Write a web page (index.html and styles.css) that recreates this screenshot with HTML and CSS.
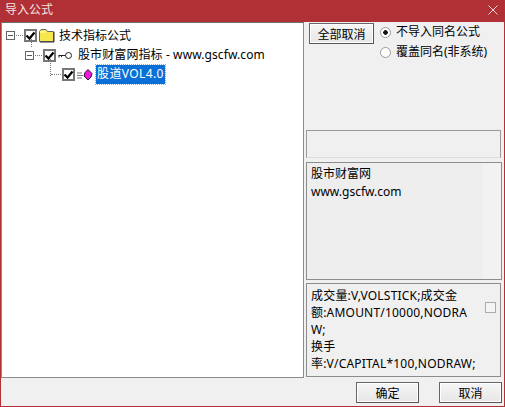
FILE: index.html
```html
<!DOCTYPE html>
<html lang="zh">
<head>
<meta charset="utf-8">
<title>导入公式</title>
<link rel="stylesheet" href="styles.css">
</head>
<body>
<div class="window">
  <header class="titlebar">
    <span class="title">导入公式</span>
    <svg class="close" width="10" height="10" viewBox="0 0 10 10"><path d="M.5.5l9 9M9.500.5l-9 9" stroke="#f0d8d8" stroke-width="1" fill="none"/></svg>
  </header>
  <div class="main">
    <section class="tree">
      <div class="node">
        <span class="expander"></span><span class="dots-h"></span>
        <span class="check"><svg width="11" height="11" viewBox="0 0 11 11"><path d="M1.500 5.500l3 3 5-6" stroke="#000" stroke-width="2.200" fill="none"/></svg></span>
        <svg class="icon" width="16" height="14" viewBox="0 0 16 14"><path d="M.5 12.500V2.500l1.500-2h5l1.500 2h6v10z" fill="#f7e64e" stroke="#666"/><path d="M1 3h6" stroke="#fffbc8"/><path d="M15 3v10M1 13h14" stroke="#333"/></svg>
        <span class="label">技术指标公式</span>
      </div>
      <div class="node level2">
        <span class="vline v1"></span>
        <span class="expander"></span><span class="dots-h"></span>
        <span class="check"><svg width="11" height="11" viewBox="0 0 11 11"><path d="M1.500 5.500l3 3 5-6" stroke="#000" stroke-width="2.200" fill="none"/></svg></span>
        <svg class="icon key" width="15" height="9" viewBox="0 0 15 9"><circle cx="10.500" cy="4.500" r="3" fill="#fff" stroke="#222"/><path d="M7.500 4.500H.5M1 4.500v2M3.500 4.500v1.500" stroke="#222" fill="none"/></svg>
        <span class="label wide">股市财富网指标 - www.gscfw.com</span>
      </div>
      <div class="node level3">
        <span class="vline v2"></span>
        <span class="dots-h long"></span>
        <span class="check"><svg width="11" height="11" viewBox="0 0 11 11"><path d="M1.500 5.500l3 3 5-6" stroke="#000" stroke-width="2.200" fill="none"/></svg></span>
        <svg class="icon gem" width="16" height="12" viewBox="0 0 16 12"><path d="M0 4h5M0 6.500h6M0 9h5" stroke="#777" fill="none"/><path d="M11 .5l4 4-1 3.500-3 3-4-4 1-3.500z" fill="#f018e0" stroke="#301030"/></svg>
        <span class="label selected">股道VOL4.0</span>
      </div>
    </section>
    <aside class="side">
      <div class="options">
        <button class="btn btn-all" type="button">全部取消</button>
        <div class="radios">
          <label class="radio"><span class="dot on"></span>不导入同名公式</label>
          <label class="radio"><span class="dot"></span>覆盖同名(非系统)</label>
        </div>
      </div>
      <div class="field"></div>
      <div class="memo">股市财富网<br>www.gscfw.com</div>
      <div class="formula">
        <div class="code">成交量:V,VOLSTICK;成交金<br>额:AMOUNT/10000,NODRA<br>W;<br>换手<br>率:V/CAPITAL*100,NODRAW;</div>
        <span class="mini-check"></span>
      </div>
    </aside>
  </div>
  <footer class="footer">
    <button class="btn btn-foot" type="button">确定</button>
    <button class="btn btn-foot" type="button">取消</button>
  </footer>
</div>
</body>
</html>
```
FILE: styles.css
```css
* { box-sizing: border-box; }
html, body { margin: 0; padding: 0; }
body {
  width: 505px;
  height: 407px;
  overflow: hidden;
  font-family: "Noto Sans", "Noto Sans CJK SC", "Liberation Sans", sans-serif;
  font-size: 12px;
  color: #000;
  background: #f0f0f0;
}
.window {
  width: 505px;
  height: 407px;
  display: flex;
  flex-direction: column;
  border: 1px solid #b03035;
  border-top: 0;
  background: #f0f0f0;
}
.titlebar {
  height: 22px;
  flex: none;
  margin: 0 -1px;
  padding: 0 7px 3px 5px;
  background: #b03035;
  color: #f5e4e4;
  display: flex;
  align-items: center;
  justify-content: space-between;
}
.title { font-size: 12px; line-height: 14px; }
.main {
  flex: 1;
  display: flex;
  min-height: 0;
}
.tree {
  width: 303px;
  height: 356px;
  flex: none;
  background: #fff;
  border: 1px solid #8c8c8c;
  border-top-color: #707070;
  padding: 3px 0 0 4px;
}
.node {
  position: relative;
  height: 19px;
  display: flex;
  align-items: center;
}
.level2 { padding-left: 19px; height: 20px; }
.level3 { padding-left: 45px; height: 19px; }
.expander {
  width: 9px;
  height: 9px;
  border: 1px solid #666;
  background: linear-gradient(#555, #555) center / 5px 1px no-repeat #fff;
  flex: none;
}
.dots-h {
  width: 7px;
  height: 1px;
  margin: 0 1px;
  flex: none;
  border-top: 1px dotted #777;
}
.dots-h.long { width: 10px; margin: 0 1px 0 0; }
.vline {
  position: absolute;
  width: 1px;
  border-left: 1px dotted #777;
}
.v1 { left: 25px; top: -6px; height: 8px; }
.v2 { left: 44px; top: -8px; height: 19px; }
.check {
  width: 13px;
  height: 13px;
  border: 2px solid #777;
  background: #fff;
  flex: none;
  display: flex;
  align-items: center;
  justify-content: center;
}
.check svg { display: block; flex: none; margin: -1px; }
.icon { flex: none; margin-left: 2px; }
.label { margin-left: 4px; line-height: 16px; white-space: nowrap; font-size: 12px; }
.wide { margin-left: 5px; letter-spacing: .1px; }
.selected {
  margin-left: 3px;
  background: #0a70d8;
  color: #fff;
  outline: 1px dotted #e0a040;
  padding: 1px 1px 2px;
  letter-spacing: .4px;
}
.side {
  flex: 1;
  min-width: 0;
  padding: 1px 0 0 2px;
  display: flex;
  flex-direction: column;
}
.options {
  height: 107px;
  flex: none;
  padding: 0 0 0 3px;
  display: flex;
  align-items: flex-start;
  gap: 6px;
}
.btn {
  font-family: inherit;
  font-size: 12px;
  color: #000;
  background: linear-gradient(#f6f6f6, #e6e6e6);
  border: 1px solid #666;
  border-right-color: #555;
  border-bottom-color: #555;
  box-shadow: inset 0 0 0 1px #fff;
  padding: 0;
}
.btn-all { width: 65px; height: 21px; }
.radios { display: flex; flex-direction: column; gap: 4px; padding-top: 1px; }
.radio { display: flex; align-items: center; gap: 5px; height: 16px; line-height: 16px; white-space: nowrap; }
.dot {
  width: 11px;
  height: 11px;
  border-radius: 50%;
  border: 1px solid #9a9a9a;
  background: #fff;
  flex: none;
}
.dot.on { background: radial-gradient(circle, #111 2px, #fff 2.500px); }
.field {
  height: 28px;
  width: 195px;
  flex: none;
  border: 1px solid #999;
  border-bottom-color: #ddd;
  background: #f0f0f0;
  margin-bottom: 4px;
}
.memo {
  height: 118px;
  width: 196px;
  flex: none;
  border: 1px solid #8c8c8c;
  background: linear-gradient(90deg, #eeeeee 176px, #f2f2f2 176px);
  padding: 2px 0 0 4px;
  line-height: 18px;
  margin-bottom: 3px;
}
.formula {
  width: 195px;
  height: 94px;
  flex: none;
  border: 1px solid #8c8c8c;
  background: #f0f0f0;
  padding: 3px 0 0 4px;
  display: flex;
  align-items: flex-start;
  gap: 4px;
}
.code {
  width: 170px;
  flex: none;
  line-height: 17px;
  white-space: nowrap;
  font-size: 12px;
  letter-spacing: .2px;
}
.mini-check {
  width: 11px;
  height: 11px;
  margin-top: 15px;
  border: 1px solid #aaa;
  background: #f4f4f4;
  flex: none;
}
.footer {
  height: 28px;
  flex: none;
  padding: 4px 2px 0 0;
  display: flex;
  justify-content: flex-end;
  gap: 20px;
}
.btn-foot { width: 63px; height: 21px; }
```
